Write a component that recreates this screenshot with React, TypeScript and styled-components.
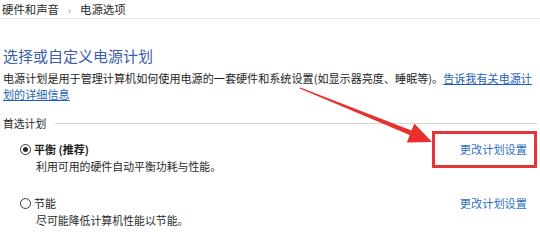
import React from "react";
import styled, { createGlobalStyle } from "styled-components";

const GlobalStyle = createGlobalStyle`
  html, body {
    margin: 0;
    padding: 0;
    background: #ffffff;
    overflow: hidden;
  }
  body {
    font-family: "Noto Sans CJK SC", "Noto Sans", sans-serif;
    color: #1e1e1e;
  }
`;

const Page = styled.div`
  position: relative;
  width: 540px;
  height: 241px;
  background: #fff;
`;

const Breadcrumb = styled.div`
  display: flex;
  align-items: center;
  gap: 9px;
  height: 18px;
  padding-left: 2px;
  border-bottom: 1px solid #e4e4e4;
  font-size: 11.4px;
  color: #2a2a2a;
`;

const Chevron = styled.span`
  font-size: 10px;
  color: #8a8a8a;
`;

const Content = styled.div`
  padding: 0 3px;
`;

const Title = styled.h1`
  margin: 27px 0 0;
  font-size: 15px;
  font-weight: 400;
  line-height: 20px;
  color: #3b5daa;
`;

const Description = styled.p`
  margin: 4px 0 0;
  font-size: 11.1px;
  line-height: 16px;
  color: #1e1e1e;
`;

const InlineLink = styled.a`
  color: #1c5fb8;
  text-decoration: underline;
  cursor: pointer;
`;

const GroupHeader = styled.div`
  display: flex;
  align-items: center;
  gap: 9px;
  margin-top: 13px;
  font-size: 10.8px;
  line-height: 16px;
  color: #2a2a2a;
`;

const GroupLine = styled.div`
  flex: 1;
  height: 1px;
  background: #d6d6d6;
`;

const Plan = styled.div<{ $top: number }>`
  display: flex;
  justify-content: space-between;
  align-items: flex-start;
  margin-top: ${(p) => p.$top}px;
  padding-left: 17px;
`;

const PlanMain = styled.div`
  display: flex;
  flex-direction: column;
`;

const PlanLabel = styled.label<{ $bold?: boolean }>`
  display: flex;
  align-items: center;
  gap: 3px;
  font-size: 11px;
  line-height: 16px;
  font-weight: ${(p) => (p.$bold ? 700 : 400)};
  color: #1e1e1e;
`;

const Radio = styled.span<{ $checked?: boolean }>`
  position: relative;
  box-sizing: border-box;
  width: 11px;
  height: 11px;
  border: 1px solid #3a3a3a;
  border-radius: 50%;
  background: #fff;
  &::after {
    content: "";
    display: ${(p) => (p.$checked ? "block" : "none")};
    position: absolute;
    left: 2px;
    top: 2px;
    width: 5px;
    height: 5px;
    border-radius: 50%;
    background: #2a2a2a;
  }
`;

const PlanDesc = styled.div`
  margin-top: 1px;
  padding-left: 16px;
  font-size: 10.9px;
  line-height: 16px;
  color: #2a2a2a;
`;

const ChangeLink = styled.a`
  margin-right: 10px;
  font-size: 11.2px;
  line-height: 16px;
  color: #2f6fc4;
  cursor: pointer;
`;

const HighlightBox = styled.div`
  position: absolute;
  left: 432px;
  top: 131px;
  width: 105px;
  height: 37px;
  box-sizing: border-box;
  border: 3px solid #e5353a;
  pointer-events: none;
`;

const ArrowLayer = styled.svg`
  position: absolute;
  left: 0;
  top: 0;
  pointer-events: none;
`;

const plans = [
  {
    name: "平衡 (推荐)",
    desc: "利用可用的硬件自动平衡功耗与性能。",
    checked: true,
    top: 10,
  },
  {
    name: "节能",
    desc: "尽可能降低计算机性能以节能。",
    checked: false,
    top: 21,
  },
];

export default function App() {
  return (
    <Page>
      <GlobalStyle />
      <Breadcrumb>
        <span>硬件和声音</span>
        <Chevron>›</Chevron>
        <span>电源选项</span>
      </Breadcrumb>
      <Content>
        <Title>选择或自定义电源计划</Title>
        <Description>
          电源计划是用于管理计算机如何使用电源的一套硬件和系统设置(如显示器亮度、睡眠等)。
          <InlineLink>告诉我有关电源计划的详细信息</InlineLink>
        </Description>
        <GroupHeader>
          <span>首选计划</span>
          <GroupLine />
        </GroupHeader>
        {plans.map((plan) => (
          <Plan key={plan.name} $top={plan.top}>
            <PlanMain>
              <PlanLabel $bold={plan.checked}>
                <Radio $checked={plan.checked} />
                {plan.name}
              </PlanLabel>
              <PlanDesc>{plan.desc}</PlanDesc>
            </PlanMain>
            <ChangeLink>更改计划设置</ChangeLink>
          </Plan>
        ))}
      </Content>
      <HighlightBox />
      <ArrowLayer width="540" height="241" viewBox="0 0 540 241">
        <polygon
          points="300.3,87.4 411.5,130.4 414.4,123.5 432,142 406.9,142.5 409.7,135.1 299.7,88.6"
          fill="#e8302c"
        />
      </ArrowLayer>
    </Page>
  );
}
